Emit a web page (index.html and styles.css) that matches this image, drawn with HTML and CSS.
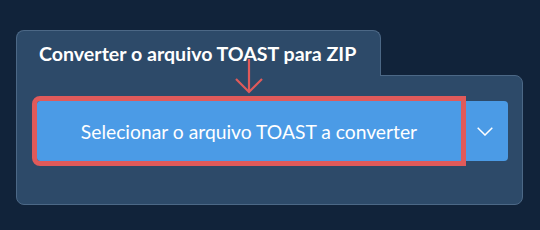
FILE: index.html
```html
<!DOCTYPE html>
<html lang="pt">
<head>
<meta charset="utf-8">
<link rel="stylesheet" href="styles.css">
</head>
<body>
<div class="page">
  <div class="converter">
    <div class="tab">Converter o arquivo TOAST para ZIP</div>
    <div class="panel">
      <div class="btn-group">
        <button class="btn-main">Selecionar o arquivo TOAST a converter</button>
        <button class="btn-drop" aria-label="Mais opções">
          <svg width="16" height="9" viewBox="0 0 16 9"><path d="M0.7 0.7 L8 8 L15.3 0.7" fill="none" stroke="#fff" stroke-width="1.5"/></svg>
        </button>
        <svg class="arrow" width="30" height="36" viewBox="0 0 30 36"><path d="M15 0 V33 M2 20 L15 33 L28 20" fill="none" stroke="#e05a5a" stroke-width="2.2"/></svg>
      </div>
    </div>
  </div>
</div>
</body>
</html>
```
FILE: styles.css
```css
html, body {
  margin: 0;
  padding: 0;
  background: #11233a;
  width: 540px;
  height: 230px;
  overflow: hidden;
}
.page {
  padding: 30px 17px 0 16px;
  font-family: Lato, "Open Sans", sans-serif;
}
.converter {
  width: 507px;
}
.tab {
  position: relative;
  z-index: 1;
  width: 341px;
  height: 34px;
  padding: 11px 0 0 22px;
  background: #2d4a69;
  border: 1px solid #4c6886;
  border-bottom: none;
  border-radius: 8px 8px 0 0;
  color: #fff;
  font-weight: 700;
  font-size: 19.6px;
  line-height: 24px;
  white-space: nowrap;
  margin-bottom: -1px;
}
.panel {
  background: #2d4a69;
  border: 1px solid #4c6886;
  border-radius: 0 8px 8px 8px;
  height: 130px;
  box-sizing: border-box;
  padding: 25px 14px 0 20px;
}
.btn-group {
  position: relative;
  display: flex;
  height: 60px;
}
.btn-main {
  flex: 1;
  border: none;
  background: #4b9be6;
  color: #fff;
  font-family: Lato, "Open Sans", sans-serif;
  font-size: 19.3px;
  padding: 0;
  border-radius: 3px 0 0 3px;
  outline: 5px solid #e05a5a;
  position: relative;
  z-index: 1;
}
.btn-drop {
  width: 47px;
  border: none;
  background: #4b9be6;
  border-radius: 0 4px 4px 0;
  display: flex;
  align-items: center;
  justify-content: center;
  padding: 0;
}
.arrow {
  position: absolute;
  left: 197px;
  top: -42px;
  z-index: 2;
}
```
